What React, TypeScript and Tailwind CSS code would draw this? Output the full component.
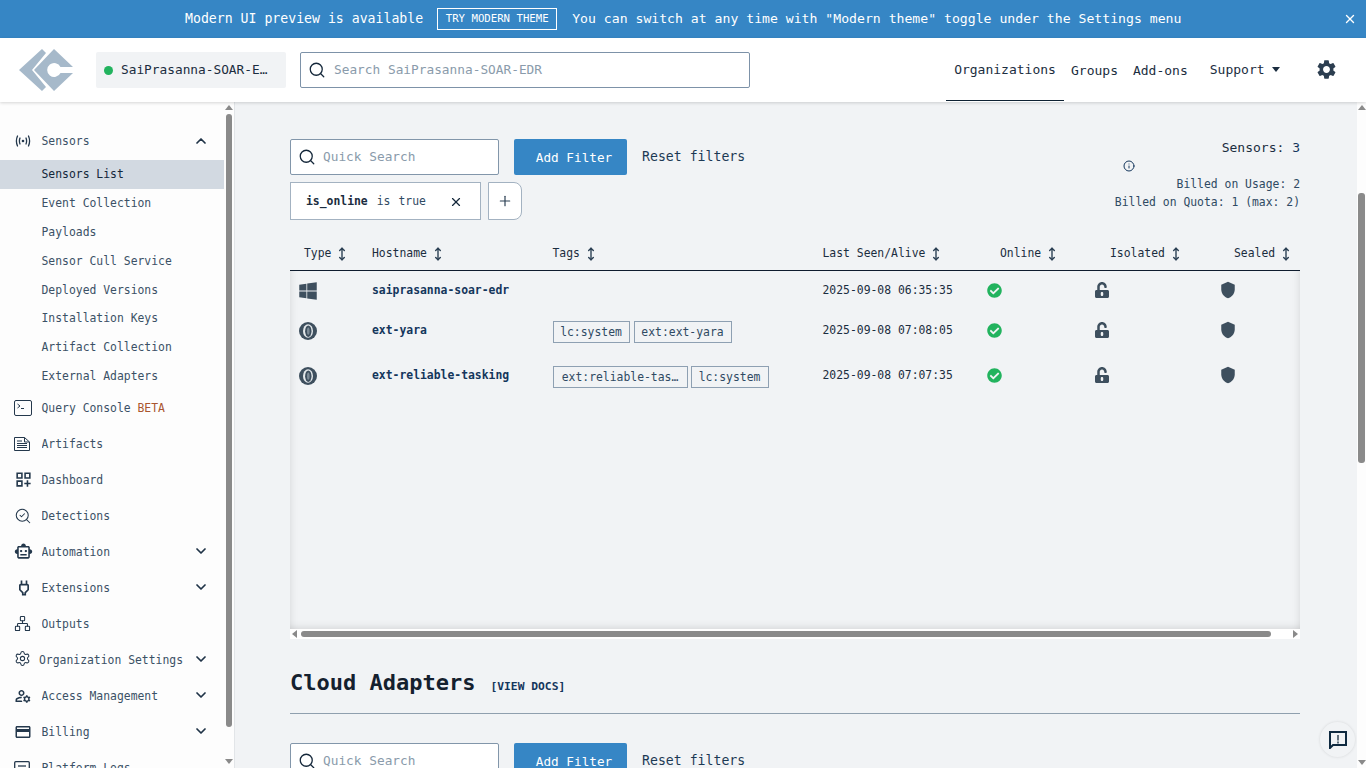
import { ChevronDown, ChevronUp, Info, MoveVertical, Network, Plus, Search, SearchCheck, Settings, X } from 'lucide-react';
import { FaCheckCircle, FaUnlockAlt, FaWindows } from 'react-icons/fa';
import {
  MdOutlineCreditCard,
  MdOutlineDashboardCustomize,
  MdOutlineManageAccounts,
  MdOutlinePower,
  MdOutlineSmartToy,
  MdSettings,
  MdShield,
} from 'react-icons/md';

function Logo() {
  return (
    <svg width="56" height="44" viewBox="18 47 56 44" className="shrink-0">
      <path d="M19 69 42 48 46 52 32 69 46 86 42 90Z" fill="#a6b9ca" />
      <path
        fillRule="evenodd"
        d="M34 69 54 48 73 66H60.5A7 7 0 1 0 60.5 72H73L54 90Z"
        fill="#a6b9ca"
      />
    </svg>
  );
}

function SensorIcon() {
  return (
    <svg width="16" height="12" viewBox="0 0 16 12" fill="none" stroke="#24384c" strokeWidth="1.300" strokeLinecap="round">
      <path d="M2.500 1Q.300 6 2.500 11M13.500 1Q15.700 6 13.500 11M5 3Q3.800 6 5 9M11 3Q12.200 6 11 9" />
      <circle cx="8" cy="6" r="1.300" fill="#24384c" stroke="none" />
    </svg>
  );
}

function TerminalIcon() {
  return (
    <svg width="18" height="16" viewBox="0 0 18 16" fill="none" stroke="#24384c" strokeWidth="1">
      <rect x="0.500" y="0.500" width="17" height="15" rx="1.500" />
      <path d="M3.500 4 6 6 3.500 8M7 8.500h3" />
    </svg>
  );
}

function ArtifactIcon() {
  return (
    <svg width="16" height="14" viewBox="0 0 16 14" fill="none" stroke="#24384c" strokeWidth="1">
      <path d="M.5.5h10l5 4.500v8.500H.5zM10.500.5V5h5M3 4h5M3 6.500h10M3 8.500h10M3 10.500h10" />
    </svg>
  );
}

function LogsIcon() {
  return (
    <svg width="16" height="14" viewBox="0 0 16 14" fill="none" stroke="#24384c" strokeWidth="1.300">
      <rect x="0.700" y="0.700" width="14.600" height="12.600" rx="1" />
      <path d="M4 5h8" />
    </svg>
  );
}

function ExtIcon() {
  return (
    <svg width="18" height="18" viewBox="0 0 18 18">
      <circle cx="9" cy="9" r="9" fill="#3e4f5e" />
      <ellipse cx="9" cy="9" rx="5" ry="6.800" fill="#e4e8eb" />
      <ellipse cx="9.300" cy="9.200" rx="3.200" ry="5.800" fill="#3e4f5e" />
      <ellipse cx="9.300" cy="9.200" rx="1.300" ry="3.600" fill="#7d8b97" />
    </svg>
  );
}

function FeedbackIcon() {
  return (
    <svg width="18" height="18" viewBox="0 0 18 18" fill="none">
      <path d="M1 1h16v13H4l-3 3z" stroke="#0f2a40" strokeWidth="2" />
      <path d="M9 4v5.500M9 10.500v2" stroke="#3e4f5e" strokeWidth="1.600" />
    </svg>
  );
}

const subItems = [
  'Sensors List',
  'Event Collection',
  'Payloads',
  'Sensor Cull Service',
  'Deployed Versions',
  'Installation Keys',
  'Artifact Collection',
  'External Adapters',
];

const iconClass = 'text-[#24384c]';

const navItems = [
  { label: 'Artifacts', icon: <ArtifactIcon /> },
  { label: 'Dashboard', icon: <MdOutlineDashboardCustomize size={19} className={iconClass} /> },
  { label: 'Detections', icon: <SearchCheck size={18} strokeWidth={1.4} className={iconClass} /> },
  { label: 'Automation', icon: <MdOutlineSmartToy size={19} className={iconClass} />, more: true },
  { label: 'Extensions', icon: <MdOutlinePower size={20} className={iconClass} />, more: true },
  { label: 'Outputs', icon: <Network size={17} strokeWidth={1.5} className={iconClass} /> },
];

function NavRow({ icon, label, more }: { icon: React.ReactNode; label: string; more?: boolean }) {
  return (
    <div className="flex h-9 items-center pr-[15px] pl-[14px]">
      <div className="mb-[1px] flex w-[27.500px] shrink-0 items-center">{icon}</div>
      <span className="flex-1 truncate text-[#3b5166]">{label}</span>
      {more && <ChevronDown size={16} strokeWidth={2.6} className="mb-[2px] text-[#1f3347]" />}
    </div>
  );
}

function Sidebar() {
  return (
    <aside className="flex w-[235px] shrink-0 border-r border-[#e2e5e8] bg-[#fdfdfd]">
      <nav className="w-[224px] shrink-0 overflow-hidden pt-[21px] text-[11.400px]">
        <div className="flex h-[37px] items-center pr-[15px] pl-[14px]">
          <div className="mb-[1px] flex w-[27.500px] shrink-0 items-center pl-[1px]">
            <SensorIcon />
          </div>
          <span className="flex-1 text-[#3b5166]">Sensors</span>
          <ChevronUp size={16} strokeWidth={2.6} className="mb-[2px] text-[#1f3347]" />
        </div>
        {subItems.map((item, i) => (
          <div
            key={item}
            className={`flex h-[28.800px] items-center pt-[1px] pl-[41.500px] ${i === 0 ? 'bg-[#d2d9e1] text-[#14273a]' : 'text-[#3b5166]'}`}
          >
            {item}
          </div>
        ))}
        <div className="flex h-9 items-center pr-[15px] pl-[14px]">
          <div className="mb-[1px] flex w-[27.500px] shrink-0 items-center">
            <TerminalIcon />
          </div>
          <span className="text-[#3b5166]">
            Query Console <span className="text-[#a9562f]">BETA</span>
          </span>
        </div>
        {navItems.map((item) => (
          <NavRow key={item.label} {...item} />
        ))}
        <div className="flex h-9 items-center pr-[15px] pl-[14px]">
          <div className="mb-[3px] flex w-[25px] shrink-0 items-center">
            <Settings size={17} strokeWidth={1.5} className={iconClass} />
          </div>
          <span className="flex-1 text-[#3b5166]">Organization Settings</span>
          <ChevronDown size={16} strokeWidth={2.6} className="mb-[2px] text-[#1f3347]" />
        </div>
        <NavRow label="Access Management" icon={<MdOutlineManageAccounts size={18} className={iconClass} />} more />
        <NavRow label="Billing" icon={<MdOutlineCreditCard size={18} className={iconClass} />} more />
        <NavRow label="Platform Logs" icon={<LogsIcon />} />
      </nav>
      <div className="flex w-[10px] shrink-0 flex-col items-center pt-[3px]">
        <span className="h-0 w-0 border-x-[4px] border-b-[5px] border-x-transparent border-b-[#8a8a8a]" />
        <div className="mt-[4px] h-[613px] w-[6px] rounded-[3px] bg-[#8a8a8a]" />
        <span className="mt-[32px] h-0 w-0 border-x-[4px] border-t-[5px] border-x-transparent border-t-[#8a8a8a]" />
      </div>
    </aside>
  );
}

function FilterRow() {
  return (
    <div className="flex h-9 items-center">
      <div className="flex h-9 w-[209px] items-center rounded-[2px] border border-[#8296aa] bg-white pl-[7px] text-[12.800px] text-[#8a9bab]">
        <Search size={18} strokeWidth={1.7} className="mr-[7px] text-[#14273a]" />
        Quick Search
      </div>
      <button className="ml-[15px] h-9 w-[113px] rounded-[2px] bg-[#3686c5] pt-[1px] pl-[7px] text-[12.700px] font-medium text-white">
        Add Filter
      </button>
      <span className="ml-[15px] text-[13.200px] text-[#1c3954]">Reset filters</span>
    </div>
  );
}

const columns = 'grid grid-cols-[82px_180.500px_270px_163.500px_109px_125px_80px]';

function HeadCell({ label, className }: { label: string; className?: string }) {
  return (
    <div className={`flex items-center gap-[4px] text-[11.400px] font-medium text-[#1b2d40] ${className ?? ''}`}>
      {label}
      <MoveVertical size={14} strokeWidth={2.4} className="text-[#2c4054]" />
    </div>
  );
}

function Tag({ children, className }: { children: string; className?: string }) {
  return (
    <span className={`inline-block border border-[#8ea0b2] text-center text-[11.400px] leading-[20px] whitespace-nowrap text-[#2f4a63] ${className ?? ''}`}>
      {children}
    </span>
  );
}

function SensorRow({ icon, host, seen, tags, height }: { icon: React.ReactNode; host: string; seen: string; tags?: React.ReactNode; height: string }) {
  return (
    <div className={`${columns} ${height} items-center`}>
      <div className="pl-[9px]">{icon}</div>
      <div className="text-[11.400px] font-bold text-[#14365c]">{host}</div>
      <div className="flex pt-[3px]">{tags}</div>
      <div className="text-[11.400px] text-[#1b2d40]">{seen}</div>
      <div className="pl-px">
        <FaCheckCircle size={15} className="text-[#22b35e]" />
      </div>
      <div className="-ml-[1px] mb-[2px]">
        <FaUnlockAlt size={16} className="text-[#3e4f5e]" />
      </div>
      <div className="-ml-[1px] mb-[2px]">
        <MdShield size={18} className="text-[#3e4f5e]" />
      </div>
    </div>
  );
}

function SensorsTable() {
  return (
    <div>
      <div className={`${columns} h-[34px] items-center border-b border-[#0f1c2e] pt-[1px]`}>
        <HeadCell label="Type" className="pl-[14px]" />
        <HeadCell label="Hostname" />
        <HeadCell label="Tags" />
        <HeadCell label="Last Seen/Alive" />
        <HeadCell label="Online" className="pl-[14px]" />
        <HeadCell label="Isolated" className="pl-[15px]" />
        <HeadCell label="Sealed" className="pl-[14px]" />
      </div>
      <div className="h-[358px] pt-[1px] shadow-[inset_8px_0_8px_-8px_rgba(0,0,0,0.12),inset_-8px_0_8px_-8px_rgba(0,0,0,0.12),inset_0_-10px_10px_-10px_rgba(0,0,0,0.16)]">
        <SensorRow
          height="h-[37px]"
          icon={<FaWindows size={20} className="-ml-[1px] text-[#3e4f5e]" />}
          host="saiprasanna-soar-edr"
          seen="2025-09-08 06:35:35"
        />
        <SensorRow
          height="h-[43px]"
          icon={<ExtIcon />}
          host="ext-yara"
          seen="2025-09-08 07:08:05"
          tags={
            <>
              <Tag className="w-[77px]">lc:system</Tag>
              <Tag className="ml-[4px] w-[98px]">ext:ext-yara</Tag>
            </>
          }
        />
        <SensorRow
          height="h-[47px]"
          icon={<ExtIcon />}
          host="ext-reliable-tasking"
          seen="2025-09-08 07:07:35"
          tags={
            <>
              <Tag className="w-[135px]">ext:reliable-tas…</Tag>
              <Tag className="ml-[3px] w-[78px]">lc:system</Tag>
            </>
          }
        />
      </div>
      <div className="flex h-[10px] items-center bg-white px-[2px]">
        <span className="h-0 w-0 border-y-[4px] border-r-[5px] border-y-transparent border-r-[#8a8a8a]" />
        <div className="ml-[4px] h-[6px] w-[970px] rounded-[3px] bg-[#8a8a8a]" />
        <span className="ml-auto h-0 w-0 border-y-[4px] border-l-[5px] border-y-transparent border-l-[#8a8a8a]" />
      </div>
    </div>
  );
}

export default function App() {
  return (
    <div className="flex h-screen flex-col overflow-hidden bg-[#f1f3f5] font-['DejaVu_Sans_Mono',monospace]">
      <div className="flex h-[38px] shrink-0 items-center bg-[#3686c5] pl-[185px] text-[13.200px] text-white">
        <span>Modern UI preview is available</span>
        <span className="ml-[14px] flex h-[22px] w-[120px] items-center justify-center border border-white text-[10.700px] font-medium">
          TRY MODERN THEME
        </span>
        <span className="ml-[15px] text-[13.150px]">You can switch at any time with "Modern theme" toggle under the Settings menu</span>
        <X size={14} strokeWidth={2.4} className="ml-auto mr-[9px]" />
      </div>

      <header className="relative z-10 flex h-[64px] shrink-0 items-center bg-white pl-[18px] shadow-[0_1px_3px_rgba(0,0,0,0.16)]">
        <Logo />
        <div className="ml-[22px] flex h-9 w-[190px] items-center rounded-[2px] bg-[#f1f3f5] pl-[8px] text-[12.800px] text-[#1b2d40]">
          <span className="mr-[8px] h-[9px] w-[9px] rounded-full bg-[#22b35e]" />
          SaiPrasanna-SOAR-E…
        </div>
        <div className="ml-[14px] flex h-9 w-[450px] items-center rounded-[2px] border border-[#7d92a8] bg-white pl-[7px] text-[12.800px] text-[#8a9bab]">
          <Search size={18} strokeWidth={1.7} className="mr-[8px] text-[#14273a]" />
          Search SaiPrasanna-SOAR-EDR
        </div>
        <nav className="ml-[196px] flex h-[63px] items-stretch self-start text-[13px] text-[#1b2d40]">
          <div className="flex w-[118px] items-center justify-center border-b border-[#0f2233] pt-[1px]">Organizations</div>
          <div className="ml-[7px] flex items-center pt-[2px]">Groups</div>
          <div className="ml-[15px] flex items-center pt-[2px]">Add-ons</div>
          <div className="ml-[22px] flex items-center">
            Support
            <span className="ml-[7px] h-0 w-0 border-x-[4.500px] border-t-[5px] border-x-transparent border-t-[#1b2d40]" />
          </div>
          <div className="ml-[35px] flex items-center">
            <MdSettings size={23} className="text-[#2c3e50]" />
          </div>
        </nav>
      </header>

      <div className="flex min-h-0 flex-1">
        <Sidebar />
        <main className="relative min-w-0 flex-1 overflow-hidden pt-[37px] pr-[57px] pl-[55px]">
          <div className="flex items-start justify-between">
            <div>
              <FilterRow />
              <div className="mt-[7px] flex">
                <div className="flex h-[38px] w-[191px] items-center border border-[#a3b2c1] bg-white pt-[1px] pl-[15px] text-[11.400px] text-[#2f4a63]">
                  <span className="font-bold text-[#1b2d40]">is_online</span>
                  <span className="ml-[9px]">is</span>
                  <span className="ml-[8px]">true</span>
                  <X size={14} strokeWidth={2} className="ml-[23px] text-[#14273a]" />
                </div>
                <div className="ml-[7px] flex h-[38px] w-[34px] items-center justify-center rounded-r-[8px] border border-[#a3b2c1] bg-white">
                  <Plus size={16} strokeWidth={1.8} className="text-[#2c4054]" />
                </div>
              </div>
            </div>
            <div className="relative text-right text-[11.400px] leading-[18px] text-[#2f4a63]">
              <div className="text-[13px] leading-[18px] text-[#1b2d40]">
                Sensors: <span className="text-[#14365c]">3</span>
              </div>
              <div className="flex h-[18px] items-center pl-[8px]">
                <Info size={12} strokeWidth={2} className="text-[#14365c]" />
              </div>
              <div>Billed on Usage: 2</div>
              <div>Billed on Quota: 1 (max: 2)</div>
            </div>
          </div>

          <div className="mt-[17px]">
            <SensorsTable />
          </div>

          <div className="mt-[27px] flex h-8 items-center">
            <h2 className="text-[22px] font-bold text-[#14202e]">Cloud Adapters</h2>
            <span className="ml-[15px] pt-[10px] text-[11.300px] font-bold text-[#14365c]">[VIEW DOCS]</span>
          </div>
          <div className="mt-[15px] border-b border-[#8f9fae]" />
          <div className="mt-[29px]">
            <FilterRow />
          </div>

          <div className="absolute right-[2px] bottom-[11px] flex h-[35px] w-[35px] items-center justify-center rounded-full bg-[#f1f3f5] shadow-[0_0_3px_rgba(0,0,0,0.12)]">
            <FeedbackIcon />
          </div>
        </main>
        <div className="flex w-[9px] shrink-0 flex-col items-center bg-[#fdfdfd] pt-[3px]">
          <span className="h-0 w-0 border-x-[4px] border-b-[5px] border-x-transparent border-b-[#8a8a8a]" />
          <div className="mt-[83px] h-[270px] w-[7px] rounded-[3px] bg-[#8a8a8a]" />
          <span className="mt-auto mb-[3px] h-0 w-0 border-x-[4px] border-t-[5px] border-x-transparent border-t-[#8a8a8a]" />
        </div>
      </div>
    </div>
  );
}
